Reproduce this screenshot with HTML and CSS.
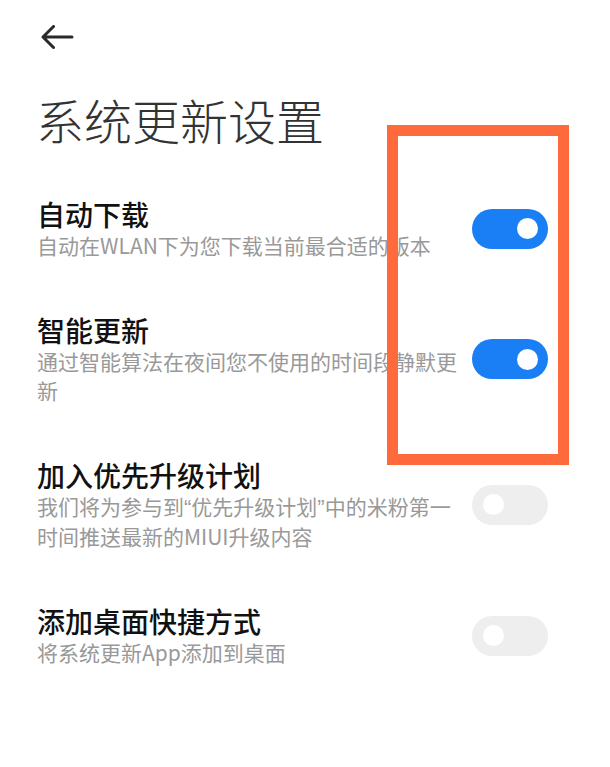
FILE: index.html
```html
<!DOCTYPE html>
<html lang="zh-CN">
<head>
<meta charset="utf-8">
<title>系统更新设置</title>
<link rel="stylesheet" href="styles.css">
</head>
<body>
<div class="page">
  <header class="topbar">
    <svg class="back" width="34" height="24" viewBox="0 0 34 24" aria-hidden="true">
      <path d="M32 12 H3 M13.5 1.5 L3 12 L13.5 22.5" fill="none" stroke="#2a2a2a" stroke-width="3" stroke-linecap="round" stroke-linejoin="round"/>
    </svg>
  </header>
  <h1 class="page-title">系统更新设置</h1>
  <div class="list">
    <div class="row">
      <div class="text">
        <div class="row-title">自动下载</div>
        <div class="row-sub">自动在WLAN下为您下载当前最合适的版本</div>
      </div>
      <div class="switch on"><span class="knob"></span></div>
    </div>
    <div class="row">
      <div class="text">
        <div class="row-title">智能更新</div>
        <div class="row-sub">通过智能算法在夜间您不使用的时间段静默更新</div>
      </div>
      <div class="switch on"><span class="knob"></span></div>
    </div>
    <div class="row">
      <div class="text">
        <div class="row-title">加入优先升级计划</div>
        <div class="row-sub">我们将为参与到<span class="q">“</span>优先升级计划<span class="q">”</span>中的米粉第一时间推送最新的MIUI升级内容</div>
      </div>
      <div class="switch"><span class="knob"></span></div>
    </div>
    <div class="row">
      <div class="text">
        <div class="row-title">添加桌面快捷方式</div>
        <div class="row-sub">将系统更新App添加到桌面</div>
      </div>
      <div class="switch"><span class="knob"></span></div>
    </div>
  </div>
  <div class="highlight"></div>
</div>
</body>
</html>
```

FILE: styles.css
```css
* { box-sizing: border-box; }

html, body {
  margin: 0;
  padding: 0;
  background: #ffffff;
}

body {
  font-family: "Noto Sans CJK SC", "Noto Sans", sans-serif;
  color: #1a1a1a;
  width: 610px;
  height: 767px;
  overflow: hidden;
}

.page {
  position: relative;
  width: 610px;
  height: 767px;
}

.topbar {
  height: 74px;
  display: flex;
  align-items: center;
  padding-left: 40px;
}

.back {
  display: block;
}

.page-title {
  margin: 0;
  padding-left: 36px;
  font-size: 48px;
  font-weight: 300;
  line-height: 90px;
  color: #333333;
}

.list {
  padding-top: 7px;
}

.row {
  display: flex;
  align-items: center;
  justify-content: space-between;
  padding: 26px 62px 27px 37px;
}

.text {
  width: 428px;
}

.row-title {
  font-size: 28px;
  line-height: 34px;
  font-weight: 500;
  color: #111111;
}

.row-sub {
  font-size: 21px;
  line-height: 29px;
  color: #999999;
}

.q {
  font-family: "Liberation Sans", sans-serif;
  font-size: 22px;
}

.switch {
  position: relative;
  flex: none;
  width: 76px;
  height: 40px;
  border-radius: 20px;
  background: #eeeeee;
}

.switch.on {
  background: #1a7ff5;
}

.knob {
  position: absolute;
  top: 9.5px;
  left: 10.5px;
  width: 21px;
  height: 21px;
  border-radius: 50%;
  background: #ffffff;
}

.switch.on .knob {
  left: auto;
  right: 10.5px;
}

.highlight {
  position: absolute;
  left: 387px;
  top: 125px;
  width: 182px;
  height: 340px;
  border: 11px solid #ff6a3c;
}
```
